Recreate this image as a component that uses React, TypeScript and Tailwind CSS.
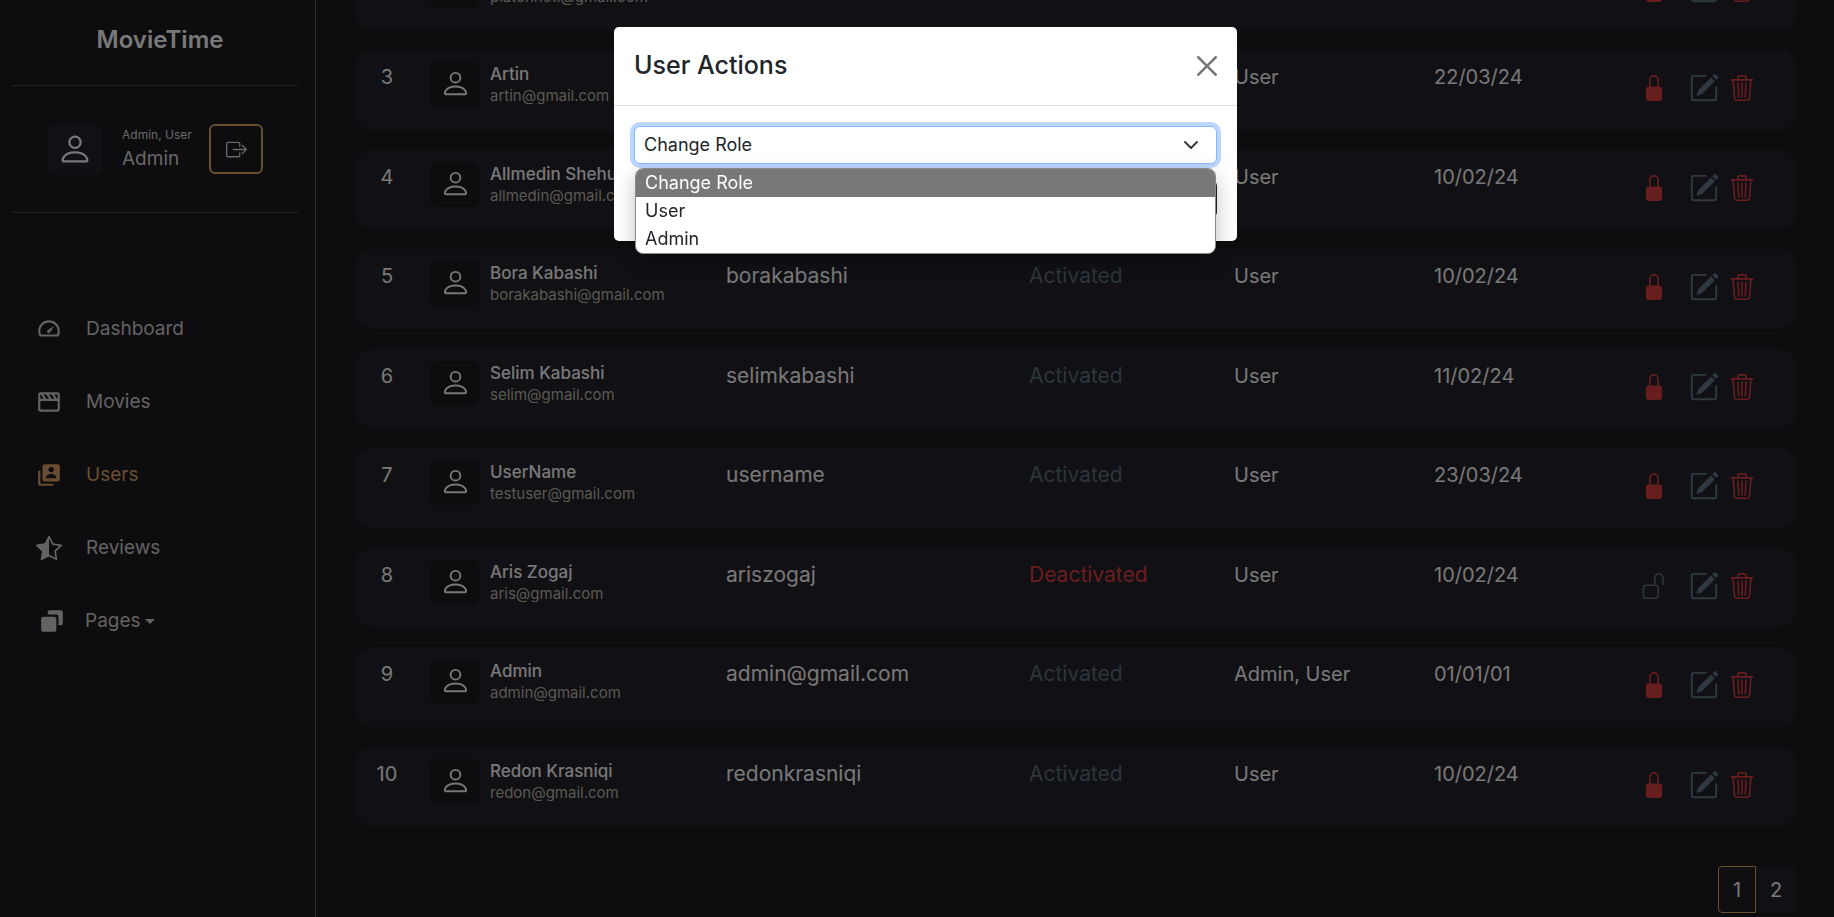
import type { ReactNode } from 'react';
import { BiMovie, BiSolidCopy, BiSolidUserAccount, BiTachometer } from 'react-icons/bi';
import {
  BsBoxArrowRight,
  BsLockFill,
  BsPencilSquare,
  BsPerson,
  BsStarHalf,
  BsTrash3,
  BsUnlock,
} from 'react-icons/bs';

type User = {
  id: number;
  name: string;
  email: string;
  username: string;
  active: boolean;
  roles: string;
  created: string;
};

const users: User[] = [
  { id: 2, name: 'Platon Hoti', email: 'platonhoti@gmail.com', username: 'platonhoti', active: true, roles: 'User', created: '10/02/24' },
  { id: 3, name: 'Artin', email: 'artin@gmail.com', username: 'artin', active: true, roles: 'User', created: '22/03/24' },
  { id: 4, name: 'Allmedin Shehu', email: 'allmedin@gmail.com', username: 'allmedin', active: true, roles: 'User', created: '10/02/24' },
  { id: 5, name: 'Bora Kabashi', email: 'borakabashi@gmail.com', username: 'borakabashi', active: true, roles: 'User', created: '10/02/24' },
  { id: 6, name: 'Selim Kabashi', email: 'selim@gmail.com', username: 'selimkabashi', active: true, roles: 'User', created: '11/02/24' },
  { id: 7, name: 'UserName', email: 'testuser@gmail.com', username: 'username', active: true, roles: 'User', created: '23/03/24' },
  { id: 8, name: 'Aris Zogaj', email: 'aris@gmail.com', username: 'ariszogaj', active: false, roles: 'User', created: '10/02/24' },
  { id: 9, name: 'Admin', email: 'admin@gmail.com', username: 'admin@gmail.com', active: true, roles: 'Admin, User', created: '01/01/01' },
  { id: 10, name: 'Redon Krasniqi', email: 'redon@gmail.com', username: 'redonkrasniqi', active: true, roles: 'User', created: '10/02/24' },
];

function NavItem({ icon, label, active }: { icon: ReactNode; label: string; active?: boolean }) {
  return (
    <li>
      <a
        href="#"
        className={`flex h-6 items-center gap-6 text-[19px] ${active ? 'text-[#d39b66]' : 'text-[#c9c5c5]'}`}
      >
        <span className="text-[26px]">{icon}</span>
        {label}
      </a>
    </li>
  );
}

function Sidebar() {
  return (
    <aside className="w-[316px] shrink-0 border-r border-[#4f5a66] pr-[17px] pl-3">
      <div className="flex h-[86px] items-center justify-center border-b border-[#3f4a4e] pb-[6px]">
        <a href="#" className="pl-[10px] text-2xl font-semibold text-[#f0f0f0]">
          MovieTime
        </a>
      </div>
      <div className="flex h-[127px] items-center border-b border-[#3f4a4e] pl-[35px]">
        <div className="flex h-[51px] w-[55px] items-center justify-center rounded-lg bg-[#222028] text-[#f0f0f0]">
          <BsPerson size={36} />
        </div>
        <div className="ml-5 w-[87px] text-[#d0d0d0]">
          <p className="text-xs leading-5">Admin, User</p>
          <p className="text-[19px] leading-7">Admin</p>
        </div>
        <button
          type="button"
          aria-label="Sign out"
          className="flex h-[50px] w-[54px] items-center justify-center rounded-md border-2 border-[#d0a062] text-[#d0d0d0]"
        >
          <BsBoxArrowRight size={21} />
        </button>
      </div>
      <nav className="pt-[104px] pl-6">
        <ul className="flex flex-col gap-[49px]">
          <NavItem icon={<BiTachometer />} label="Dashboard" />
          <NavItem icon={<BiMovie />} label="Movies" />
          <NavItem icon={<BiSolidUserAccount />} label="Users" active />
          <NavItem icon={<BsStarHalf />} label="Reviews" />
          <li>
            <button
              type="button"
              aria-haspopup="menu"
              className="flex h-6 items-center pl-[3px] text-[19px] text-[#c9c5c5]"
            >
              <BiSolidCopy size={26} className="mr-5" />
              Pages
              <svg className="ml-1" width="10" height="5" viewBox="0 0 10 5" fill="currentColor">
                <path d="M0 0h10L5 5z" />
              </svg>
            </button>
          </li>
        </ul>
      </nav>
    </aside>
  );
}

function UserRow({ user }: { user: User }) {
  return (
    <tr className="h-[79px] text-xl leading-[30px] text-[#f0f0f0] even:h-20 [&>td]:bg-[#222129] [&>td]:pt-3 [&>td]:align-top">
      <td className="w-[74px] rounded-l-2xl">
        <div className="w-[62px] text-center">{user.id}</div>
      </td>
      <td className="w-[296px]">
        <div className="flex gap-[10px]">
          <div className="flex h-[45px] w-[50px] items-center justify-center rounded-lg bg-[#1a191d] pb-[2px]">
            <BsPerson size={31} />
          </div>
          <div>
            <p className="text-[17px] leading-6 font-medium">{user.name}</p>
            <p className="text-[15px] leading-5 text-[#b5b2a2]">{user.email}</p>
          </div>
        </div>
      </td>
      <td className="w-[303px] text-[21px]">{user.username}</td>
      <td className={`w-[205px] text-[21px] ${user.active ? 'text-[#566c70]' : 'text-[#d43c3c]'}`}>
        {user.active ? 'Activated' : 'Deactivated'}
      </td>
      <td className="w-[200px]">{user.roles}</td>
      <td>{user.created}</td>
      <td className="w-[169px] rounded-r-2xl">
        <div className="flex h-[52px] items-center pl-[14px]">
          <button
            type="button"
            aria-label={user.active ? 'Lock user' : 'Unlock user'}
            className={`mr-[22px] ${user.active ? 'text-[#d03c3c]' : 'text-[#566a70]'}`}
          >
            {user.active ? <BsLockFill size={26} /> : <BsUnlock size={26} />}
          </button>
          <button type="button" aria-label="Edit user" className="mr-[10px] text-[#5e7480]">
            <BsPencilSquare size={30} />
          </button>
          <button type="button" aria-label="Delete user" className="text-[#d03c3c]">
            <BsTrash3 size={26} />
          </button>
        </div>
      </td>
    </tr>
  );
}

function UserActionsDialog() {
  return (
    <div className="fixed inset-0 flex items-start justify-center bg-black/50 pt-[27px] pl-[17px]">
      <section
        role="dialog"
        aria-labelledby="dialog-title"
        className="w-[623px] rounded-[5px] bg-white text-[#212529]"
      >
        <header className="flex h-[79px] items-center justify-between border-b border-[#dee2e6] px-5">
          <h2 id="dialog-title" className="text-[25px] font-medium">
            User Actions
          </h2>
          <button type="button" aria-label="Close" className="text-[#777777]">
            <svg width="20" height="20" viewBox="0 0 16 16" fill="currentColor">
              <path d="M.293.293a1 1 0 0 1 1.414 0L8 6.586 14.293.293a1 1 0 1 1 1.414 1.414L9.414 8l6.293 6.293a1 1 0 0 1-1.414 1.414L8 9.414l-6.293 6.293a1 1 0 0 1-1.414-1.414L6.586 8 .293 1.707a1 1 0 0 1 0-1.414z" />
            </svg>
          </button>
        </header>
        <div className="px-5 pt-5 pb-[23px]">
          <div className="relative">
            <select
              aria-label="Change role"
              className="block h-[38px] w-full appearance-none rounded-md border border-[#86b7fe] bg-white px-[9px] text-lg ring-4 ring-[#bdd6fb]"
            >
              <option>Change Role</option>
              <option>User</option>
              <option>Admin</option>
            </select>
            <svg
              className="pointer-events-none absolute top-[11px] right-[18px]"
              width="16"
              height="16"
              viewBox="0 0 16 16"
              fill="none"
              stroke="#343a40"
              strokeWidth="2"
              strokeLinecap="round"
              strokeLinejoin="round"
            >
              <path d="m2 5 6 6 6-6" />
            </svg>
            <ul
              role="listbox"
              aria-label="Roles"
              className="absolute inset-x-px top-[42px] overflow-hidden rounded-lg border border-[#868a90] bg-white text-lg leading-7 shadow-[0_8px_20px_rgba(0,0,0,0.25)]"
            >
              <li role="option" aria-selected="true" className="bg-[#787878] px-[9px] text-white">
                Change Role
              </li>
              <li role="option" aria-selected="false" className="px-[9px]">
                User
              </li>
              <li role="option" aria-selected="false" className="px-[9px]">
                Admin
              </li>
            </ul>
          </div>
          <div className="mt-4 flex justify-end">
            <button type="button" className="h-[38px] rounded-md bg-[#212529] px-3 text-white">
              Save
            </button>
          </div>
        </div>
      </section>
    </div>
  );
}

export default function App() {
  return (
    <div className="flex h-screen overflow-hidden bg-[#1a191d] font-['Inter',sans-serif]">
      <Sidebar />
      <main className="flex min-w-0 flex-1 flex-col justify-end pr-[38px] pb-1 pl-10">
        <table className="w-full shrink-0 table-fixed border-separate border-spacing-x-0 border-spacing-y-5">
          <tbody>
            {users.map((user) => (
              <UserRow key={user.id} user={user} />
            ))}
          </tbody>
        </table>
        <nav aria-label="Pagination" className="mt-5 flex shrink-0 justify-end text-xl text-[#f0f0f0]">
          <a
            href="#"
            aria-current="page"
            className="flex h-[47px] w-[38px] items-center justify-center rounded-l border border-[#d0a062] bg-[#1e1d22]"
          >
            1
          </a>
          <a href="#" className="flex h-[47px] w-10 items-center justify-center rounded-r-md bg-[#222129]">
            2
          </a>
        </nav>
      </main>
      <UserActionsDialog />
    </div>
  );
}
